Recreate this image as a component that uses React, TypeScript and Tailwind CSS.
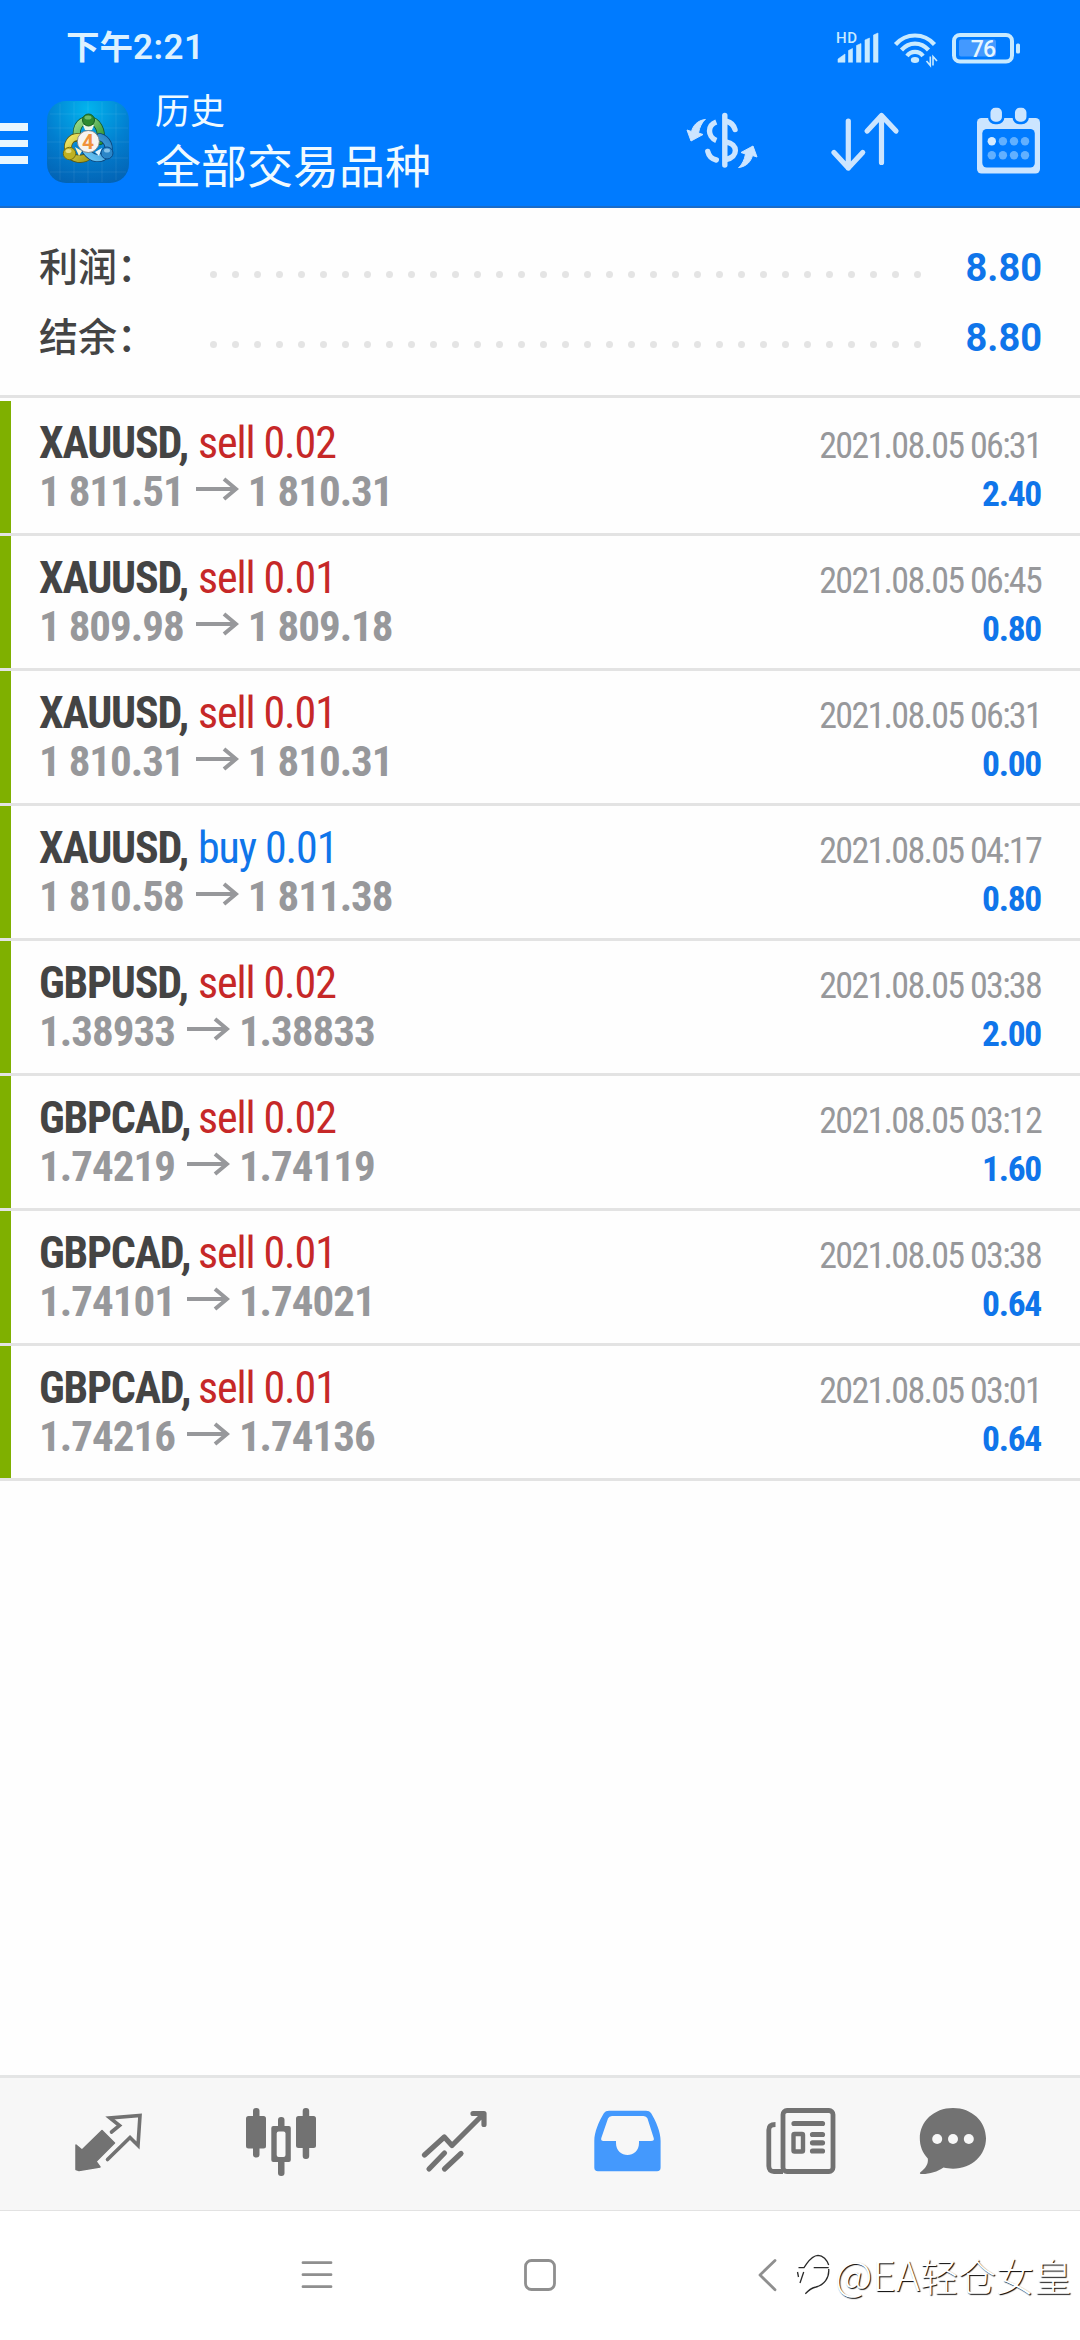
import type { ReactNode } from "react";

type Deal = {
  symbol: string;
  side: "sell" | "buy";
  volume: string;
  open: string;
  close: string;
  time: string;
  profit: string;
};

const deals: Deal[] = [
  { symbol: "XAUUSD", side: "sell", volume: "0.02", open: "1 811.51", close: "1 810.31", time: "2021.08.05 06:31", profit: "2.40" },
  { symbol: "XAUUSD", side: "sell", volume: "0.01", open: "1 809.98", close: "1 809.18", time: "2021.08.05 06:45", profit: "0.80" },
  { symbol: "XAUUSD", side: "sell", volume: "0.01", open: "1 810.31", close: "1 810.31", time: "2021.08.05 06:31", profit: "0.00" },
  { symbol: "XAUUSD", side: "buy", volume: "0.01", open: "1 810.58", close: "1 811.38", time: "2021.08.05 04:17", profit: "0.80" },
  { symbol: "GBPUSD", side: "sell", volume: "0.02", open: "1.38933", close: "1.38833", time: "2021.08.05 03:38", profit: "2.00" },
  { symbol: "GBPCAD", side: "sell", volume: "0.02", open: "1.74219", close: "1.74119", time: "2021.08.05 03:12", profit: "1.60" },
  { symbol: "GBPCAD", side: "sell", volume: "0.01", open: "1.74101", close: "1.74021", time: "2021.08.05 03:38", profit: "0.64" },
  { symbol: "GBPCAD", side: "sell", volume: "0.01", open: "1.74216", close: "1.74136", time: "2021.08.05 03:01", profit: "0.64" },
];

function Icon({ box, className = "size-20", children }: { box: string; className?: string; children: ReactNode }) {
  return (
    <svg viewBox={box} className={`shrink-0 ${className}`} fill="none" strokeLinecap="round" strokeLinejoin="round">
      {children}
    </svg>
  );
}

function StatusBar() {
  return (
    <div className="flex h-[84px] items-center pt-3 pl-[66px] pr-[58px] text-[#dcf1ff]">
      <div className="flex items-baseline font-['Roboto','Noto_Sans_CJK_SC',sans-serif] font-bold">
        <span className="text-[33.500px] leading-[40px]">下午</span>
        <span className="text-[35px] font-semibold leading-[40px] tracking-[0.5px]">2:21</span>
      </div>
      <Icon box="834 28 48 40" className="ml-auto h-10 w-12">
        <text x="836" y="42.5" fontSize="15" fontWeight="500" fontFamily="Roboto, sans-serif" fill="#c8eaff" letterSpacing="0.6">HD</text>
        <path d="M838 62v-3l7-5v8zM848.5 62V50.5l4-2V62zM856.5 62V45.500l4.500-2V62zM865 62V40l4.500-2V62zM873.500 62V35l4.500-2V62z" fill="#c8eaff" stroke="#c8eaff" strokeWidth="0.6" />
      </Icon>
      <Icon box="890 28 50 40" className="ml-2 h-10 w-[50px]">
        <g stroke="#c8eaff" strokeWidth="4.200" strokeLinecap="butt">
          <path d="M895.500 44.500C906 32.500 924 32.500 934.500 44.500" />
          <path d="M901.500 50C909 41.500 921 41.500 928.500 50" />
          <path d="M907 56C911 50.500 919 50.500 923 56" />
        </g>
        <ellipse cx="915" cy="60" rx="4.200" ry="3" fill="#c8eaff" />
        <path d="M930.300 56.500V65.500L926.500 61M933 65.500V56.500L937 61" stroke="#c8eaff" strokeWidth="1.600" strokeLinecap="butt" strokeLinejoin="miter" />
      </Icon>
      <Icon box="950 28 72 40" className="ml-[10px] h-10 w-[72px]">
        <rect x="954" y="35" width="58" height="26.500" rx="6" stroke="#c8eaff" strokeWidth="4" />
        <rect x="959" y="39.500" width="37" height="17" rx="2" fill="#4399ff" />
        <rect x="1016" y="43.500" width="4" height="10" rx="1.500" fill="#c8eaff" />
        <text x="983" y="57" fontSize="23" fontWeight="500" fontFamily="Roboto, sans-serif" fill="#e6f6ff" textAnchor="middle" letterSpacing="-0.8">76</text>
      </Icon>
    </div>
  );
}

function AppLogo() {
  return (
    <svg viewBox="0 0 82 82" className="ml-[19px] size-[82px] shrink-0">
      <defs>
        <radialGradient id="tile" cx="0.500" cy="0.100" r="0.950">
          <stop offset="0" stopColor="#02b4ee" />
          <stop offset="0.550" stopColor="#027fd0" />
          <stop offset="1" stopColor="#0363b4" />
        </radialGradient>
        <linearGradient id="green" x1="0" y1="0" x2="1" y2="1">
          <stop offset="0" stopColor="#9bdc8c" />
          <stop offset="1" stopColor="#2f9433" />
        </linearGradient>
        <linearGradient id="yellow" x1="0" y1="0" x2="1" y2="1">
          <stop offset="0" stopColor="#f0e766" />
          <stop offset="1" stopColor="#a59b15" />
        </linearGradient>
        <linearGradient id="blue" x1="1" y1="0" x2="0" y2="1">
          <stop offset="0" stopColor="#2a83c4" />
          <stop offset="1" stopColor="#6cc8f6" />
        </linearGradient>
      </defs>
      <rect width="82" height="82" rx="19" fill="url(#tile)" />
      <path d="M13 3v76M27 1v80M41 0v82M55 1v80M69 3v76M3 13h76M1 27h80M0 41h82M1 57h80M3 71h76" stroke="#fff" strokeOpacity="0.080" fill="none" />
      <g fill="none" strokeLinecap="round">
        <path d="M30 37C28 23 36 19 42 19C50 20 56 29 53 40" stroke="#15592a" strokeWidth="8" />
        <path d="M30 37C28 23 36 19 42 19C50 20 56 29 53 40" stroke="url(#green)" strokeWidth="6.400" />
        <path d="M33 36C23 35 19 44 22 51C25 59 36 60 43 54" stroke="#5d5a12" strokeWidth="8" />
        <path d="M33 36C23 35 19 44 22 51C25 59 36 60 43 54" stroke="url(#yellow)" strokeWidth="6.400" />
        <path d="M53 36C60 38 64 46 60 52C54 60 45 58 39 50" stroke="#0c4377" strokeWidth="8" />
        <path d="M53 36C60 38 64 46 60 52C54 60 45 58 39 50" stroke="url(#blue)" strokeWidth="6.400" />
      </g>
      <path d="M36 24l2 5h7l2-5z" fill="#e9f6e6" />
      <path d="M28 46l4 9 3-5z" fill="#fbf7cf" />
      <path d="M55 47l-3 8-4-4z" fill="#e0f3fd" />
      <circle cx="41.500" cy="19" r="6" fill="#2d8a31" stroke="#165f24" />
      <circle cx="22.500" cy="52.500" r="6.200" fill="#bfb122" stroke="#77700f" />
      <circle cx="60" cy="52" r="6" fill="#2b86c8" stroke="#0d4c88" />
      <ellipse cx="41" cy="16.500" rx="3.500" ry="2" fill="#8bd080" fillOpacity="0.700" />
      <ellipse cx="21.500" cy="50" rx="3" ry="2" fill="#f7f0a0" fillOpacity="0.700" />
      <ellipse cx="60" cy="49.500" rx="3" ry="2" fill="#a9dcfa" fillOpacity="0.700" />
      <circle cx="41.300" cy="40.500" r="11" fill="#f6f4f1" stroke="#777" strokeWidth="0.800" />
      <text x="41" y="48" textAnchor="middle" fontSize="21" fontWeight="700" fontFamily="Roboto, sans-serif" fill="#f0923c">4</text>
    </svg>
  );
}

function Header() {
  return (
    <header className="h-[208px] border-b-2 border-[#1a6cc9] bg-[#007bff]">
      <StatusBar />
      <div className="flex h-[116px] items-center pr-8">
        <div className="flex w-7 flex-col gap-[9px] pt-[3px]">
          <div className="h-[7.500px] bg-[#e8f6ff]" />
          <div className="h-[7.500px] bg-[#e8f6ff]" />
          <div className="h-[7.500px] bg-[#e8f6ff]" />
        </div>
        <AppLogo />
        <div className="-mt-[7px] ml-[26px] font-['Noto_Sans_CJK_SC',sans-serif] text-[#f0faff]">
          <p className="text-[35px] leading-[49px]">历史</p>
          <p className="text-[46px] leading-[60px]">全部交易品种</p>
        </div>
        <div className="ml-auto flex gap-[63px]">
          <Icon box="682 102 80 80">
            <g stroke="#cce5ff" strokeWidth="5.400">
              <path d="M724.800 115.500V165" />
              <path d="M716.300 122C711 124 709.500 128 709.500 131S711.500 138.500 716.300 140.500" strokeLinecap="butt" />
              <path d="M707.800 151.500C708.800 156 712 159 716.300 160" />
              <path d="M727 121.500C731.500 122.500 733.500 125 735 129.500" />
              <path d="M726 142C738.500 144 738.500 157 726 159.500" />
            </g>
            <path id="turn" d="M705 119.500C697 120.500 693 126 691.500 131.500L687 130L691 141L703 134.500L698.500 133C699.500 127 702 122.500 705 119.500Z" fill="#cce5ff" stroke="#cce5ff" />
            <use href="#turn" transform="rotate(180 722 143.500)" />
          </Icon>
          <Icon box="825 102 80 80">
            <path d="M848.300 121V168M834 152.500L848.300 168L862.700 152.500M881.500 162.500V115.500M867.200 131L881.500 115.500L896 131" stroke="#cce5ff" strokeWidth="5.200" />
          </Icon>
          <Icon box="968 102 80 80">
            <rect x="977" y="118" width="63" height="55.500" rx="4.500" fill="#cce5ff" />
            <rect x="982.300" y="129" width="52.500" height="38.500" rx="4.500" fill="#007bff" />
            <rect x="989.200" y="106.500" width="14" height="16.500" rx="6" fill="#cce5ff" stroke="#007bff" strokeWidth="2.500" />
            <rect x="1013.700" y="106.500" width="14" height="16.500" rx="6" fill="#cce5ff" stroke="#007bff" strokeWidth="2.500" />
            <g fill="#62b0ff">
              <circle cx="991.800" cy="141.300" r="4.200" fill="#d5ebff" />
              <circle cx="1002.900" cy="141.300" r="4.200" />
              <circle cx="1014" cy="141.300" r="4.200" />
              <circle cx="1025" cy="141.300" r="4.200" />
              <circle cx="991.800" cy="155.300" r="4.200" />
              <circle cx="1002.900" cy="155.300" r="4.200" />
              <circle cx="1014" cy="155.300" r="4.200" />
              <circle cx="1025" cy="155.300" r="4.200" />
            </g>
          </Icon>
        </div>
      </div>
    </header>
  );
}

function SummaryRow({ label, value }: { label: string; value: string }) {
  return (
    <div className="flex h-[70px] items-center">
      <p className="w-[171px] font-['Noto_Sans_CJK_SC',sans-serif] text-[39px] font-medium leading-[60px] text-[#444]">{label}</p>
      <div className="mt-[21px] flex gap-[15px]">
        {Array.from({ length: 33 }, (_, i) => (
          <span key={i} className="size-[7px] rounded-full bg-[#e4e4e4]" />
        ))}
      </div>
      <p className="mt-2 ml-auto text-[38px] font-bold leading-[60px] text-[#0f75ea]">{value}</p>
    </div>
  );
}

function DealRow({ deal }: { deal: Deal }) {
  return (
    <li className="flex h-[135px] border-b-[3px] border-[#e3e3e3]">
      <div className="w-[11px] bg-[#7fb000]" />
      <div className="flex-1 pt-[18px] pr-[39px] pl-[28px] font-['Roboto_Condensed',sans-serif]">
        <div className="flex h-12 items-baseline leading-[48px]">
          <p className="w-[159px] text-[44px] font-bold tracking-[-1.200px] text-[#444]">{deal.symbol},</p>
          <p className={`text-[44px] tracking-[-1.100px] ${deal.side === "sell" ? "text-[#c62828]" : "text-[#0f75ea]"}`}>
            {deal.side} {deal.volume}
          </p>
          <p className="ml-auto text-[36px] tracking-[-1.700px] text-[#97989b]">{deal.time}</p>
        </div>
        <div className="flex h-12 items-baseline leading-[48px]">
          <p className="text-[43px] font-bold tracking-[-1px] text-[#97989b]">{deal.open}</p>
          <Icon box="0 0 43 24" className="relative -top-[5px] mr-[9px] ml-3 h-6 w-[43px]">
            <path d="M0 12H40M28 2L40 12L28 22" stroke="#97989b" strokeWidth="4" strokeLinecap="butt" strokeLinejoin="miter" />
          </Icon>
          <p className="text-[43px] font-bold tracking-[-1px] text-[#97989b]">{deal.close}</p>
          <p className="ml-auto text-[35.500px] font-bold tracking-[-1.300px] text-[#0f75ea]">{deal.profit}</p>
        </div>
      </div>
    </li>
  );
}

function TabBar() {
  return (
    <nav className="flex h-[136px] gap-[93px] border-t-[3px] border-b border-t-[#e4e5e5] border-b-[#e2e2e2] bg-[#f7f7f7] pt-[22px] pl-[68px]">
      <Icon box="68 2100 80 80">
        <path d="M76 2145L82 2150L102 2130.500L114.500 2143L96 2161.500L100 2167L79 2170.500L76 2169.500Z" fill="#727272" stroke="#727272" strokeWidth="1.500" />
        <path d="M111.500 2132L119.500 2125.500L110 2118L140 2115.500L138 2145.500L130 2137.500L107.500 2159.500" stroke="#727272" strokeWidth="3.600" strokeLinejoin="miter" />
      </Icon>
      <Icon box="241 2100 80 80">
        <g fill="#727272">
          <rect x="253" y="2108" width="6.500" height="49.500" rx="3" />
          <rect x="246" y="2116" width="20" height="32.500" rx="2.500" />
          <rect x="278" y="2117" width="6.500" height="59" rx="3" />
          <rect x="271.300" y="2126" width="19.500" height="36" rx="2" />
          <rect x="302.700" y="2108" width="6.500" height="51" rx="3" />
          <rect x="296" y="2116" width="20" height="32" rx="2.500" />
        </g>
        <rect x="276.700" y="2131.500" width="8.800" height="25.500" rx="2" fill="#f7f7f7" />
      </Icon>
      <Icon box="414 2100 80 80">
        <path d="M424.500 2155L444.300 2137L452 2145.500L483.500 2114M473 2113.500H484V2124.500M429 2169L444.500 2153M444.500 2169L461 2153.500" stroke="#727272" strokeWidth="5.200" />
      </Icon>
      <Icon box="587 2100 80 80">
        <path fillRule="evenodd" d="M609 2110.700H646Q649.500 2110.700 651 2113C656 2121 660.600 2132 660.600 2141V2167.500Q660.600 2171.300 657 2171.300H598Q594.300 2171.300 594.300 2167.500V2141C594.300 2132 599 2121 604 2113Q605.500 2110.700 609 2110.700ZM612 2116Q609 2116 608 2118.500L601.300 2138Q600.500 2141 603.500 2141H616V2143C616 2159 639 2159 639 2143V2141H651Q654.700 2141 653.700 2138L647.500 2118.500Q646.500 2116 643.500 2116Z" fill="#4499fd" />
      </Icon>
      <Icon box="760 2100 80 80">
        <rect x="783" y="2110.500" width="50" height="61" rx="4" stroke="#727272" strokeWidth="4.800" />
        <path d="M775.500 2124.500C771 2124.500 768.800 2126 768.800 2130V2166Q769 2171.500 774 2171.500H783" stroke="#727272" strokeWidth="4.800" strokeLinecap="butt" />
        <path d="M794 2123.500H822.500M812.500 2134.500H822.500M812.500 2142.800H822.500M812.500 2151H822.500" stroke="#727272" strokeWidth="5.200" />
        <rect x="793.500" y="2134" width="9.500" height="17.500" rx="1" stroke="#727272" strokeWidth="4.400" />
      </Icon>
      <Icon box="913 2100 80 80" className="-ml-5 size-20">
        <path d="M953 2108C972 2108 986 2121.500 986 2138.300S972 2168.700 953 2168.700C949.500 2168.700 946.500 2168.200 943.500 2167.500C937 2172 929 2174.300 921 2174C919.500 2173.800 919.500 2173 921 2171.800C926 2168 928.500 2163.500 927.800 2158.500C922.500 2153 919.800 2146 919.800 2138.300C919.800 2121.500 934 2108 953 2108Z" fill="#727272" />
        <circle cx="937.200" cy="2139" r="5" fill="#f7f7f7" />
        <circle cx="953" cy="2139" r="5" fill="#f7f7f7" />
        <circle cx="968.800" cy="2139" r="5" fill="#f7f7f7" />
      </Icon>
    </nav>
  );
}

function SystemNav() {
  return (
    <div className="relative flex h-[129px] bg-white pt-[44px] pl-[297px]">
      <Icon box="297 2255 40 40" className="size-10">
        <path d="M303 2262.700H331M303 2274.700H331M303 2286.700H331" stroke="#8f8f8f" strokeWidth="2.800" />
      </Icon>
      <Icon box="520 2255 40 40" className="ml-[183px] size-10">
        <rect x="525.500" y="2260.500" width="29" height="29" rx="6" stroke="#8f8f8f" strokeWidth="2.800" />
      </Icon>
      <Icon box="748 2255 40 40" className="ml-[188px] size-10">
        <path d="M775 2260.500L760 2275L775 2289.700" stroke="#8f8f8f" strokeWidth="2.800" />
      </Icon>
      {/* author signature laid over the navigation bar */}
      <div className="absolute top-[34px] right-2 flex items-center">
        <svg viewBox="798 2260 36 46" className="h-[46px] w-9" fill="none" stroke="#2a2a2a" strokeWidth="1.300">
          <path d="M800.500 2276.700H806L808.700 2272.700C812 2268 815 2264.500 820 2264.300C825 2264.300 829 2269 830.700 2274M815.700 2276.700H830.700M830.700 2278C831.500 2287 826 2294 818 2296C813 2297 811 2299 807.300 2302.700M805.700 2281L802 2292M799.500 2281L800.500 2286" />
        </svg>
        <span className="ml-[3px] font-['Noto_Sans_CJK_SC',sans-serif] text-[38px] font-light leading-[56px] text-white [text-shadow:1px_1px_1px_#000]">
          <span className="text-[41px]">@EA</span>轻仓女皇
        </span>
      </div>
    </div>
  );
}

export default function App() {
  return (
    <div className="flex h-[2340px] w-[1080px] flex-col overflow-hidden bg-[#fefefe] font-['Roboto',sans-serif]">
      <Header />
      <section className="h-[190px] border-b-[3px] border-[#e3e3e3] pt-[21px] pr-[38px] pl-[39px]">
        <SummaryRow label="利润：" value="8.80" />
        <SummaryRow label="结余：" value="8.80" />
      </section>
      <ul className="pt-[3px]">
        {deals.map((deal, i) => (
          <DealRow key={i} deal={deal} />
        ))}
      </ul>
      <div className="mt-auto">
        <TabBar />
        <SystemNav />
      </div>
    </div>
  );
}
